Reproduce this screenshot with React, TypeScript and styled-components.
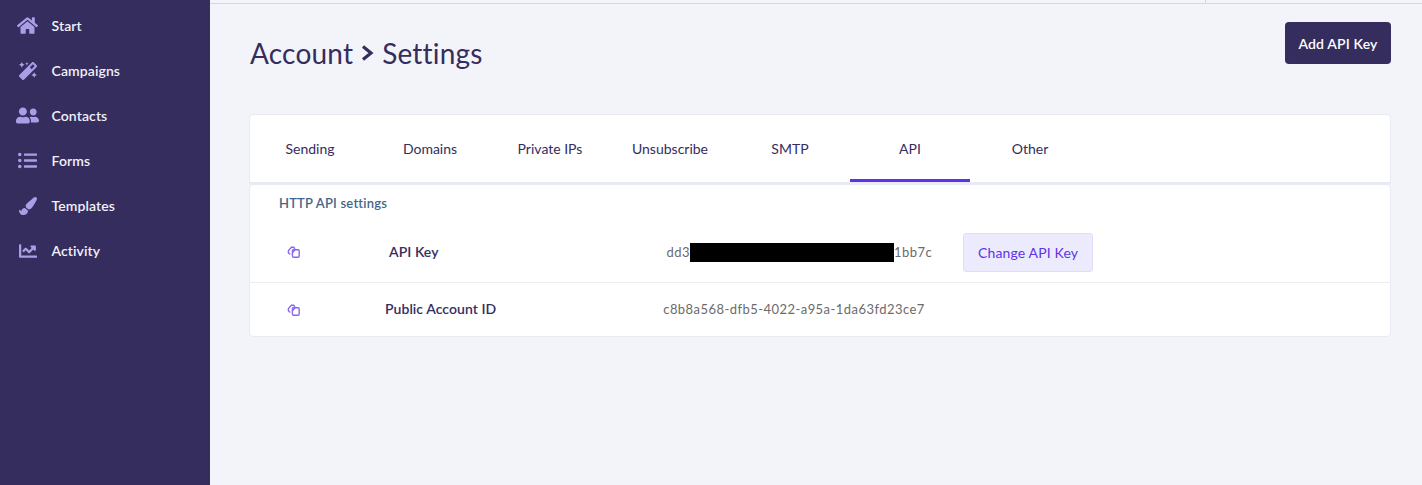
import { createGlobalStyle, styled } from 'styled-components';
import {
  FaChartLine,
  FaHome,
  FaListUl,
  FaMagic,
  FaPaintBrush,
  FaUserFriends,
} from 'react-icons/fa';

const GlobalStyle = createGlobalStyle`
  * { box-sizing: border-box; }
  html, body { margin: 0; height: 100%; }
  body {
    font-family: 'Lato', 'Noto Sans', sans-serif;
    background: #f3f4f9;
    color: #352d5e;
    overflow: hidden;
  }
`;

const navItems = [
  { label: 'Start', icon: <FaHome size={21} /> },
  { label: 'Campaigns', icon: <FaMagic size={18} /> },
  { label: 'Contacts', icon: <FaUserFriends size={23} /> },
  { label: 'Forms', icon: <FaListUl size={19} /> },
  { label: 'Templates', icon: <FaPaintBrush size={18} /> },
  { label: 'Activity', icon: <FaChartLine size={18} /> },
];

const tabs = ['Sending', 'Domains', 'Private IPs', 'Unsubscribe', 'SMTP', 'API', 'Other'];

function CopyIcon() {
  return (
    <svg width="14" height="14" viewBox="0 0 14 14" fill="none" stroke="#8a66f0" strokeWidth="1.4">
      <path d="M3.2 9.4 1.4 7.8 1.4 5.6 4.4 2.2 6.6 2.2 8 3.8" strokeLinejoin="round" />
      <rect x="5.4" y="4.8" width="6.8" height="7.4" rx="1.2" />
      <path d="M5.4 7.8 8 4.8" />
    </svg>
  );
}

export default function App() {
  return (
    <S.Page>
      <GlobalStyle />
      <S.Sidebar>
        {navItems.map(item => (
          <S.NavItem key={item.label}>
            <S.NavIcon>{item.icon}</S.NavIcon>
            {item.label}
          </S.NavItem>
        ))}
      </S.Sidebar>
      <S.Main>
        <S.TopBar>
          <S.TopTick />
        </S.TopBar>
        <S.Content>
          <S.Header>
            <S.Title>
              Account
              <svg width="13" height="18" viewBox="0 0 13 18" fill="none" stroke="#352d5e" strokeWidth="3.2">
                <path d="M2 2.5 10 9 2 15.5" />
              </svg>
              Settings
            </S.Title>
            <S.AddButton>Add API Key</S.AddButton>
          </S.Header>
          <S.TabCard>
            {tabs.map(tab => (
              <S.Tab key={tab} $active={tab === 'API'}>
                {tab}
              </S.Tab>
            ))}
          </S.TabCard>
          <S.SettingsCard>
            <S.CardTitle>HTTP API settings</S.CardTitle>
            <S.KeyRow>
              <S.CopyCell>
                <CopyIcon />
              </S.CopyCell>
              <S.Label $indent={80}>API Key</S.Label>
              <S.Value $indent={228}>
                dd3
                <S.Redacted />
                1bb7c
              </S.Value>
              <S.ChangeButton>Change API Key</S.ChangeButton>
            </S.KeyRow>
            <S.AccountRow>
              <S.CopyCell>
                <CopyIcon />
              </S.CopyCell>
              <S.Label $indent={76}>Public Account ID</S.Label>
              <S.Value $indent={167} $lift>
                c8b8a568-dfb5-4022-a95a-1da63fd23ce7
              </S.Value>
            </S.AccountRow>
          </S.SettingsCard>
        </S.Content>
      </S.Main>
    </S.Page>
  );
}

const S = {
  Page: styled.div`
    display: flex;
    height: 485px;
    overflow: hidden;
  `,
  Sidebar: styled.nav`
    flex: 0 0 210px;
    background: #352d5e;
    padding-top: 3px;
  `,
  NavItem: styled.div`
    display: flex;
    align-items: center;
    height: 45px;
    padding-left: 15px;
    gap: 11.5px;
    font-size: 14px;
    font-weight: 600;
    letter-spacing: 0.1px;
    color: #f1f0f8;
  `,
  NavIcon: styled.span`
    display: flex;
    justify-content: center;
    width: 25px;
    color: #ab9ee6;
  `,
  Main: styled.main`
    flex: 1;
    min-width: 0;
  `,
  TopBar: styled.div`
    display: flex;
    justify-content: flex-end;
    height: 4px;
    border-bottom: 1px solid #d6d8dc;
    padding-right: 216px;
  `,
  TopTick: styled.div`
    width: 1px;
    background: #d6d8dc;
  `,
  Content: styled.div`
    padding: 18px 31px 0 39px;
  `,
  Header: styled.header`
    display: flex;
    justify-content: space-between;
    align-items: flex-start;
    height: 92px;
  `,
  Title: styled.h1`
    display: flex;
    align-items: center;
    gap: 8px;
    margin: 11px 0 0 1px;
    font-size: 28px;
    line-height: 40px;
    font-weight: 400;
    letter-spacing: 0.2px;
    color: #352d5e;
  `,
  AddButton: styled.button`
    width: 106px;
    height: 42px;
    border: 0;
    border-radius: 4px;
    background: #352d5e;
    color: #fff;
    font: 600 14px 'Lato', sans-serif;
    letter-spacing: 0.15px;
  `,
  TabCard: styled.div`
    display: flex;
    height: 70px;
    background: #fff;
    border: 1px solid #e8eaf4;
    border-bottom-width: 2px;
    border-radius: 4px 4px 0 0;
  `,
  Tab: styled.div<{ $active?: boolean }>`
    width: 120px;
    padding-top: 25px;
    text-align: center;
    font-size: 14px;
    color: #352d5e;
    border-bottom: 3px solid ${p => (p.$active ? '#5f31ea' : 'transparent')};
  `,
  SettingsCard: styled.section`
    height: 153px;
    background: #fff;
    border: 1px solid #e8eaf4;
    border-radius: 4px;
  `,
  CardTitle: styled.h2`
    margin: 0;
    padding: 10px 0 0 29px;
    height: 37px;
    font-size: 13px;
    line-height: 17px;
    font-weight: 600;
    letter-spacing: 0.2px;
    color: #44668a;
  `,
  KeyRow: styled.div`
    display: flex;
    align-items: center;
    height: 61px;
    border-bottom: 1px solid #eceef3;
  `,
  AccountRow: styled.div`
    display: flex;
    align-items: center;
    height: 53px;
  `,
  CopyCell: styled.div`
    display: flex;
    justify-content: center;
    width: 30px;
    margin-left: 29px;
    flex: none;
  `,
  Label: styled.div<{ $indent: number }>`
    margin: 0 0 2px ${p => p.$indent}px;
    font-size: 14px;
    font-weight: 600;
    letter-spacing: 0.05px;
    color: #352d5e;
    white-space: nowrap;
  `,
  Value: styled.div<{ $indent: number; $lift?: boolean }>`
    display: flex;
    align-items: center;
    margin-left: ${p => p.$indent}px;
    margin-bottom: ${p => (p.$lift ? '2px' : '0')};
    font-size: 13px;
    letter-spacing: 0.45px;
    color: #6b6b6b;
    white-space: nowrap;
  `,
  Redacted: styled.span`
    width: 204px;
    height: 19px;
    background: #000;
  `,
  ChangeButton: styled.button`
    width: 130px;
    height: 39px;
    margin-left: 31px;
    border: 1px solid #e0ddfa;
    border-radius: 3px;
    background: #ecebfd;
    color: #5f31ea;
    font: 400 14px 'Lato', sans-serif;
    letter-spacing: 0.15px;
  `,
};
